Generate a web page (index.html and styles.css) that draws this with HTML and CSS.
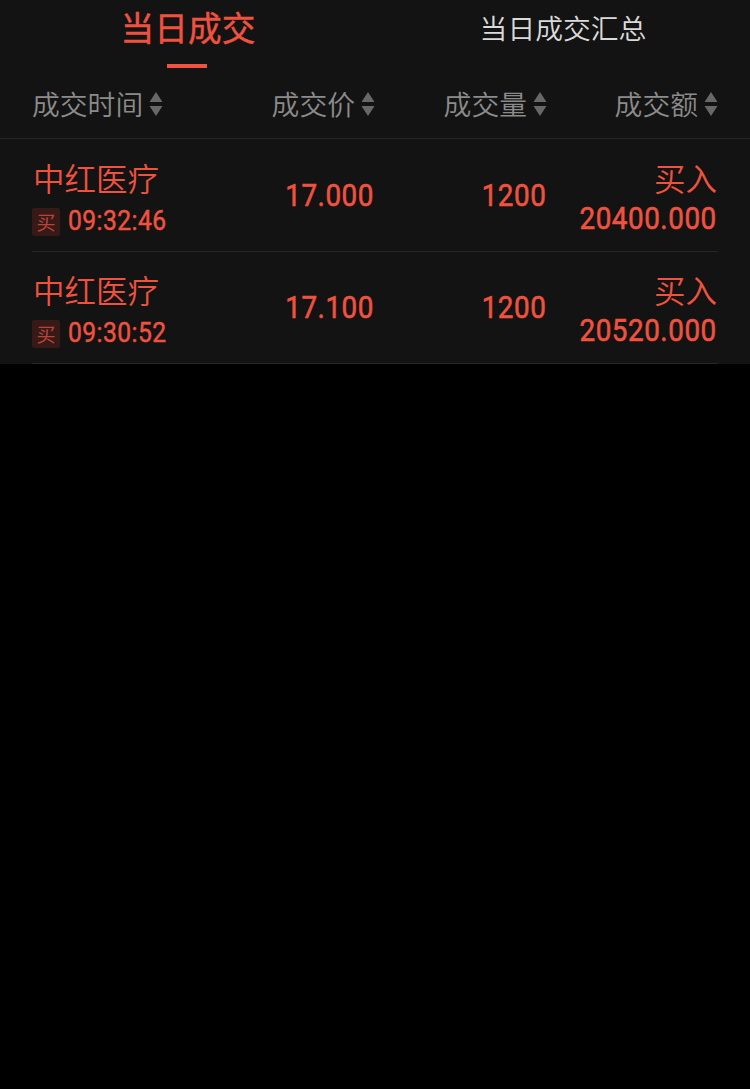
FILE: index.html
```html
<!DOCTYPE html>
<html lang="zh-CN">
<head>
    <meta charset="UTF-8">
    <meta name="viewport" content="width=device-width, initial-scale=1.0">
    <title>当日成交</title>
    <link rel="stylesheet" href="styles.css">
</head>
<body>

<div class="panel">
    <!-- 标签页 -->
    <div class="tabs">
        <div class="tab active">当日成交</div>
        <div class="tab">当日成交汇总</div>
    </div>

    <!-- 表头 -->
    <div class="table-head">
        <div class="col-time"><span>成交时间</span><svg class="sort" viewBox="0 0 14 24"><path d="M7 0L13.5 10H0.5zM7 24L13.5 14H0.5z"/></svg></div>
        <div class="col-price"><span>成交价</span><svg class="sort" viewBox="0 0 14 24"><path d="M7 0L13.5 10H0.5zM7 24L13.5 14H0.5z"/></svg></div>
        <div class="col-volume"><span>成交量</span><svg class="sort" viewBox="0 0 14 24"><path d="M7 0L13.5 10H0.5zM7 24L13.5 14H0.5z"/></svg></div>
        <div class="col-amount"><span>成交额</span><svg class="sort" viewBox="0 0 14 24"><path d="M7 0L13.5 10H0.5zM7 24L13.5 14H0.5z"/></svg></div>
    </div>

    <!-- 成交列表 -->
    <div class="list">
        <div class="row">
            <div class="col-time">
                <div class="name">中红医疗</div>
                <div class="time-line"><span class="tag">买</span><span class="time">09:32:46</span></div>
            </div>
            <div class="col-price"><span class="num">17.000</span></div>
            <div class="col-volume"><span class="num">1200</span></div>
            <div class="col-amount">
                <div class="name">买入</div>
                <span class="num">20400.000</span>
            </div>
        </div>
        <div class="row">
            <div class="col-time">
                <div class="name">中红医疗</div>
                <div class="time-line"><span class="tag">买</span><span class="time">09:30:52</span></div>
            </div>
            <div class="col-price"><span class="num">17.100</span></div>
            <div class="col-volume"><span class="num">1200</span></div>
            <div class="col-amount">
                <div class="name">买入</div>
                <span class="num">20520.000</span>
            </div>
        </div>
    </div>
</div>

</body>
</html>
```
FILE: styles.css
```css
* {
    box-sizing: border-box;
}

body {
    margin: 0;
    min-height: 100vh;
    background-color: #000;
    font-family: "Noto Sans CJK SC", sans-serif;
    font-weight: 350;
}

.panel {
    background-color: #131313;
}

.tabs {
    display: flex;
    height: 70px;
}

.tab {
    width: 50%;
    padding-top: 7px;
    padding-left: 1px;
    font-size: 27.8px;
    line-height: 40px;
    text-align: center;
    color: #dadada;
}

.tab.active {
    font-size: 33.7px;
    font-weight: 400;
    -webkit-text-stroke: 0.4px #ef523f;
    color: #ef523f;
}

.tab.active::after {
    content: "";
    display: block;
    width: 40px;
    height: 4px;
    margin: 17px 0 0 166px;
    background-color: #ef523f;
}

.table-head,
.row {
    display: grid;
    grid-template-columns: 171px 172px 172px 171px;
    align-items: center;
}

.table-head {
    height: 69px;
    padding: 0 32px;
    border-bottom: 1px solid #262626;
    font-size: 27.8px;
    line-height: 40px;
    color: #8b8b8b;
}

.table-head > div {
    display: flex;
    align-items: center;
    justify-content: flex-end;
}

.table-head > .col-time {
    justify-content: flex-start;
}

.table-head span {
    padding-bottom: 2px;
}

.sort {
    width: 14px;
    height: 24px;
    margin-left: 6px;
    fill: #686868;
}

.list {
    padding-top: 1px;
}

.row {
    height: 112px;
    margin: 0 32px;
    border-bottom: 1px solid #262626;
    color: #ef523f;
}

.row > div {
    display: flex;
    flex-direction: column;
    align-items: flex-end;
    padding-right: 1px;
}

.row > .col-time {
    align-items: flex-start;
}

.name {
    height: 44px;
    font-size: 31.5px;
    line-height: 42px;
}

.col-time .name {
    padding-left: 1px;
}

.num {
    font-family: Roboto, sans-serif;
    font-size: 32px;
    font-weight: 400;
    -webkit-text-stroke: 0.6px #ef523f;
    line-height: 36px;
    letter-spacing: 0.6px;
    transform: scaleX(0.87);
    transform-origin: right center;
}

.row .col-price,
.row .col-volume {
    padding-bottom: 1px;
}

.col-amount .num {
    height: 36px;
    line-height: 37px;
}

.time-line {
    display: flex;
    align-items: center;
    height: 36px;
    padding-top: 8px;
}

.tag {
    width: 28px;
    height: 28px;
    margin-right: 8px;
    border-radius: 2px;
    background-color: #371a18;
    font-size: 19px;
    font-weight: 400;
    line-height: 27px;
    text-align: center;
    color: #b94436;
}

.time {
    margin-top: -1px;
    font-family: Roboto, sans-serif;
    font-size: 28px;
    font-weight: 400;
    -webkit-text-stroke: 0.5px #ef523f;
    line-height: 32px;
    letter-spacing: 0.5px;
    transform: scaleX(0.88);
    transform-origin: left center;
}
```
